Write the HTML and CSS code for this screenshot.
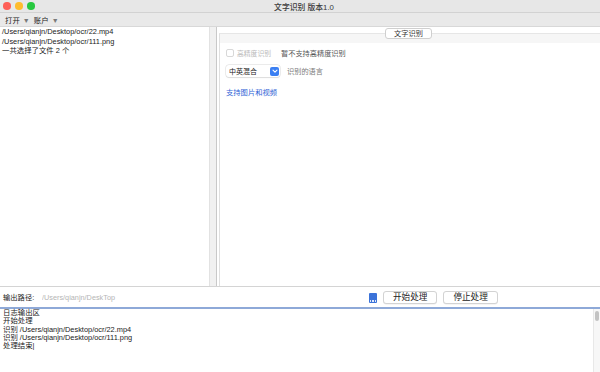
FILE: index.html
```html
<!DOCTYPE html>
<html lang="zh">
<head>
  <meta charset="UTF-8">
  <title>文字识别 版本1.0</title>
  <link rel="stylesheet" href="styles.css">
</head>
<body>
  <div class="window">
    <div class="titlebar">
      <div class="lights">
        <span class="light red"></span>
        <span class="light yellow"></span>
        <span class="light green"></span>
      </div>
      <span class="title">文字识别 版本1.0</span>
    </div>

    <div class="menubar">
      <span class="menu">打开 <i>▼</i></span>
      <span class="menu">账户 <i>▼</i></span>
    </div>

    <div class="main">
      <div class="file-list">
        <div>/Users/qianjn/Desktop/ocr/22.mp4</div>
        <div>/Users/qianjn/Desktop/ocr/111.png</div>
        <div>一共选择了文件 2 个</div>
      </div>
      <div class="splitter"></div>
      <div class="right-pane">
        <div class="tab-row">
          <span class="tab">文字识别</span>
        </div>
        <div class="tab-pane">
          <div class="opt-row">
            <label class="check"><span class="box"></span>高精度识别</label>
            <span class="hint">暂不支持高精度识别</span>
          </div>
          <div class="opt-row">
            <div class="select">
              <span>中英混合</span>
              <span class="select-btn">
                <svg width="8" height="8" viewBox="0 0 8 8"><path d="M2 3.2 L4 5.2 L6 3.2" fill="none" stroke="#fff" stroke-width="1.1" stroke-linecap="round" stroke-linejoin="round"/></svg>
              </span>
            </div>
            <span class="hint light">识别的语言</span>
          </div>
          <a class="link">支持图片和视频</a>
        </div>
      </div>
    </div>

    <div class="output-row">
      <span class="out-label">输出路径:</span>
      <input class="out-path" type="text" placeholder="/Users/qianjn/DeskTop">
      <span class="browse"><i></i><i></i><i></i></span>
      <button class="btn">开始处理</button>
      <button class="btn">停止处理</button>
    </div>

    <div class="log">
      <div class="log-text">
        <div>日志输出区</div>
        <div>开始处理</div>
        <div>识别 /Users/qianjn/Desktop/ocr/22.mp4</div>
        <div>识别 /Users/qianjn/Desktop/ocr/111.png</div>
        <div>处理结束|</div>
      </div>
      <div class="scrollbar"><span class="thumb"></span></div>
    </div>
  </div>
</body>
</html>
```

FILE: styles.css
```css
* {
  box-sizing: border-box;
}
body {
  margin: 0;
  background: #fff;
  font-family: 'Liberation Sans', 'Noto Sans CJK SC', sans-serif;
  font-size: 7.4px;
  color: #222;
  overflow: hidden;
}
.window {
  display: flex;
  flex-direction: column;
  width: 600px;
  height: 372px;
}
/* Title bar */
.titlebar {
  position: relative;
  flex: none;
  height: 13px;
  background: #e7e7e7;
  border-bottom: 1px solid #d2d2d2;
  display: flex;
  align-items: center;
  justify-content: center;
}
.lights {
  position: absolute;
  left: 3px;
  top: 2px;
  display: flex;
  gap: 4.5px;
}
.light {
  width: 7.5px;
  height: 7.5px;
  border-radius: 50%;
}
.red { background: #fe5f57; }
.yellow { background: #febc2e; }
.green { background: #28c840; }
.title {
  font-size: 7.8px;
  font-weight: 500;
  color: #3a3a3a;
  margin-left: 8px;
}
/* Menu bar */
.menubar {
  flex: none;
  height: 14px;
  background: #e9e9e9;
  border-bottom: 1px solid #d8d8d8;
  display: flex;
  align-items: center;
  gap: 4px;
  padding-left: 5px;
}
.menu {
  color: #222;
}
.menu i {
  font-style: normal;
  font-size: 7px;
  color: #7a7a7a;
  margin-left: 1px;
}
/* Main split */
.main {
  flex: 1;
  display: flex;
  min-height: 0;
}
.file-list {
  width: 209px;
  padding: 0 0 0 2px;
  line-height: 9.7px;
}
.splitter {
  width: 8px;
  background: #f1f1f1;
  border-left: 1px solid #e2e2e2;
  border-right: 1px solid #c9c9c9;
}
.right-pane {
  flex: 1;
  display: flex;
  flex-direction: column;
  padding-left: 2px;
}
.tab-row {
  display: flex;
  justify-content: center;
  padding-top: 1px;
  padding-right: 2px;
}
.tab {
  position: relative;
  z-index: 1;
  height: 11px;
  padding: 0 8px;
  background: #fff;
  border: 1px solid #cfcfcf;
  border-radius: 3px;
  line-height: 9px;
  color: #333;
  font-size: 7.2px;
}
.tab-pane {
  flex: 1;
  margin-top: -6px;
  border-top: 1px solid #e6e6e6;
  border-left: 1px solid #e0e0e0;
  background: linear-gradient(#f6f6f6 0, #f6f6f6 9px, #fff 9px);
  padding: 14px 0 0 6px;
}
.opt-row {
  display: flex;
  align-items: center;
  height: 10px;
  white-space: nowrap;
}
.opt-row + .opt-row {
  margin-top: 7px;
  height: 12px;
}
.check {
  flex: none;
  display: flex;
  align-items: center;
  gap: 3px;
  font-size: 6.8px;
  color: #b9b9b9;
  width: 55px;
}
.box {
  width: 8px;
  height: 8px;
  border: 1px solid #d8d8d8;
  border-radius: 2px;
  background: #fff;
}
.hint {
  flex: none;
  font-size: 7.2px;
  color: #555;
}
.hint.light {
  color: #7a7a7a;
  margin-left: 7px;
  margin-top: -3px;
}
.select {
  flex: none;
  width: 54px;
  height: 12px;
  display: flex;
  align-items: center;
  justify-content: space-between;
  padding: 0 1px 0 3px;
  background: #fff;
  border-radius: 3px;
  box-shadow: 0 0 0 0.5px #dadada, 0 0.5px 1px rgba(0, 0, 0, 0.12);
  font-size: 7px;
  color: #222;
}
.select-btn {
  width: 9px;
  height: 9px;
  border-radius: 2px;
  background: #3b7ff2;
  display: flex;
  align-items: center;
  justify-content: center;
}
.link {
  display: block;
  margin-top: 10px;
  color: #2f5fd6;
  font-size: 7.3px;
}
/* Output row */
.output-row {
  flex: none;
  height: 21px;
  border-top: 1px solid #d4d4d4;
  display: flex;
  align-items: center;
  padding-left: 3px;
}
.out-label {
  width: 39px;
  font-size: 7.3px;
  color: #222;
}
.out-path {
  width: 324px;
  height: 14px;
  border: none;
  outline: none;
  padding: 0;
  font-family: inherit;
  font-size: 7.3px;
  background: transparent;
}
.out-path::placeholder {
  color: #b5b5b5;
}
.browse {
  width: 8px;
  height: 10px;
  margin-left: 3px;
  margin-top: 2px;
  border-radius: 1px;
  background: #3b73d9;
  display: flex;
  align-items: flex-end;
  justify-content: center;
  gap: 1px;
  padding-bottom: 1.5px;
}
.browse i {
  width: 1.2px;
  height: 1.2px;
  background: #dfe8fb;
}
.btn {
  height: 13px;
  margin-left: 6px;
  padding: 0 9px;
  background: #fff;
  border: 1px solid #d3d3d3;
  border-radius: 3px;
  font-family: inherit;
  font-size: 8.6px;
  line-height: 11px;
  color: #222;
  box-shadow: 0 0.5px 0.5px rgba(0, 0, 0, 0.08);
}
/* Log */
.log {
  flex: none;
  height: 65px;
  display: flex;
  border-top: 2px solid #8ea9d8;
}
.log-text {
  flex: 1;
  padding-left: 3px;
  line-height: 8.3px;
}
.scrollbar {
  width: 7px;
  background: #f7f7f7;
  border-left: 1px solid #e8e8e8;
  padding: 2px 1px 0 1px;
}
.thumb {
  display: block;
  height: 10px;
  border-radius: 2px;
  background: #c3c3c3;
}
```
